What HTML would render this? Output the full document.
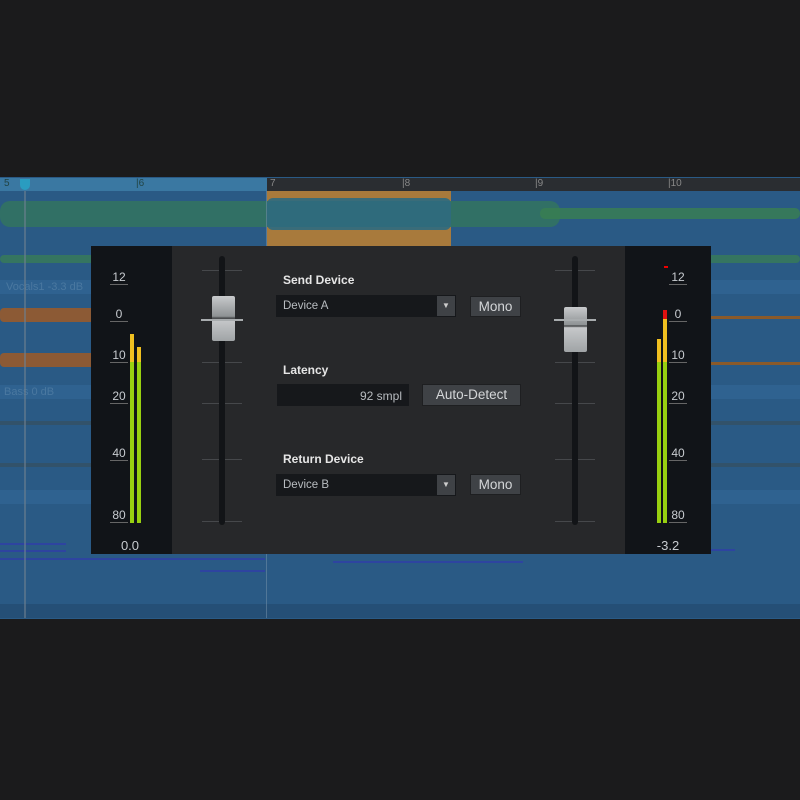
<!DOCTYPE html>
<html><head><meta charset="utf-8"><style>
*{margin:0;padding:0;box-sizing:border-box}
body{width:800px;height:800px;background:#1b1b1c;position:relative;overflow:hidden;font-family:"Liberation Sans","DejaVu Sans",sans-serif}
.a{position:absolute}
.t{color:#9aa0a6;font-size:12px}
.lbl{color:#e6e6e6;font-size:12px;font-weight:bold}
.dd{background:#16181b;color:#b8bcc0;font-size:11.5px;padding:5px 7px}
.btn{background:#3f4246;border:1px solid #1e1f21;color:#d4d6d8;font-size:13.5px;text-align:center;line-height:19px}
.tick{background:#46484b;height:1px}
.sl{color:#c8ccd0;font-size:12px;border-bottom:1px solid #666;width:18px;text-align:center;line-height:13px}
</style></head><body>
<div class="a" style="left:0;top:177px;width:800px;height:442px;background:#2a5a85"></div>
<div class="a" style="left:0;top:178px;width:267px;height:13px;background:#3a78a2"></div>
<div class="a" style="left:267px;top:178px;width:533px;height:13px;background:#2a2d31"></div>
<div class="a t" style="left:4px;top:178px;font-size:10px;color:#244">5</div>
<div class="a t" style="left:136px;top:178px;font-size:10px;color:#244">|6</div>
<div class="a t" style="left:270px;top:178px;font-size:10px;color:#888">7</div>
<div class="a t" style="left:402px;top:178px;font-size:10px;color:#888">|8</div>
<div class="a t" style="left:535px;top:178px;font-size:10px;color:#888">|9</div>
<div class="a t" style="left:668px;top:178px;font-size:10px;color:#888">|10</div>
<div class="a" style="left:20px;top:179px;width:10px;height:11px;background:#2a9cc0;border-radius:0 0 5px 5px"></div>
<div class="a" style="left:267px;top:191px;width:184px;height:55px;background:#a87a3c"></div>
<div class="a" style="left:0;top:201px;width:560px;height:26px;background:#33745f;opacity:.85;border-radius:10px"></div>
<div class="a" style="left:267px;top:198px;width:184px;height:32px;background:#2e6a80;opacity:.9;border-radius:6px"></div>
<div class="a" style="left:540px;top:208px;width:260px;height:11px;background:#3a8050;opacity:.8;border-radius:5px"></div>
<div class="a" style="left:0;top:255px;width:800px;height:8px;background:#3a8050;opacity:.7;border-radius:4px"></div>
<div class="a" style="left:0;top:280px;width:800px;height:14px;background:#2f6290"></div>
<div class="a t" style="left:6px;top:281px;font-size:11px;color:#4a78a0">Vocals1 -3.3 dB</div>
<div class="a" style="left:0;top:308px;width:95px;height:14px;background:#a55a20;opacity:.8;border-radius:4px"></div>
<div class="a" style="left:0;top:353px;width:95px;height:14px;background:#a55a20;opacity:.8;border-radius:4px"></div>
<div class="a" style="left:711px;top:316px;width:89px;height:3px;background:#8a5a2a"></div>
<div class="a" style="left:711px;top:362px;width:89px;height:3px;background:#8a5a2a"></div>
<div class="a" style="left:0;top:385px;width:800px;height:14px;background:#2f6290"></div>
<div class="a t" style="left:4px;top:386px;font-size:11px;color:#4a78a0">Bass 0 dB</div>
<div class="a" style="left:0;top:421px;width:800px;height:4px;background:#3a4a50;opacity:.5"></div>
<div class="a" style="left:0;top:463px;width:800px;height:4px;background:#3a4a50;opacity:.5"></div>
<div class="a" style="left:0;top:490px;width:800px;height:14px;background:#2f6290"></div>
<div class="a" style="left:0;top:543px;width:66px;height:2px;background:#2e44a0"></div>
<div class="a" style="left:0;top:550px;width:66px;height:2px;background:#2e44a0"></div>
<div class="a" style="left:0;top:558px;width:265px;height:2px;background:#2e44a0"></div>
<div class="a" style="left:200px;top:570px;width:65px;height:2px;background:#2e44a0"></div>
<div class="a" style="left:333px;top:561px;width:190px;height:2px;background:#2e44a0"></div>
<div class="a" style="left:711px;top:549px;width:24px;height:2px;background:#2e44a0"></div>
<div class="a" style="left:0;top:604px;width:800px;height:14px;background:#254f76"></div>
<div class="a" style="left:24px;top:191px;width:2px;height:427px;background:#6c7f90;opacity:.6"></div>
<div class="a" style="left:266px;top:191px;width:1px;height:427px;background:#6c8aa5;opacity:.6"></div>
<div class="a" style="left:91px;top:246px;width:620px;height:308px;background:#27282a"></div>
<div class="a" style="left:91px;top:246px;width:81px;height:308px;background:#111418"></div>
<div class="a" style="left:625px;top:246px;width:86px;height:308px;background:#111418"></div>
<div class="a sl" style="left:110px;top:271px">12</div>
<div class="a sl" style="left:110px;top:308px">0</div>
<div class="a sl" style="left:110px;top:349px">10</div>
<div class="a sl" style="left:110px;top:390px">20</div>
<div class="a sl" style="left:110px;top:447px">40</div>
<div class="a sl" style="left:110px;top:509px">80</div>
<div class="a" style="left:130px;top:334px;width:4px;height:189px;background:linear-gradient(#f0c020 0 28px,#98d010 28px)"></div>
<div class="a" style="left:137px;top:347px;width:4px;height:176px;background:linear-gradient(#f0c020 0 15px,#98d010 15px)"></div>
<div class="a" style="left:110px;top:538px;width:40px;text-align:center;color:#c8ccd0;font-size:13px">0.0</div>
<div class="a sl" style="left:669px;top:271px">12</div>
<div class="a sl" style="left:669px;top:308px">0</div>
<div class="a sl" style="left:669px;top:349px">10</div>
<div class="a sl" style="left:669px;top:390px">20</div>
<div class="a sl" style="left:669px;top:447px">40</div>
<div class="a sl" style="left:669px;top:509px">80</div>
<div class="a" style="left:664px;top:266px;width:4px;height:2px;background:#e00"></div>
<div class="a" style="left:657px;top:339px;width:4px;height:184px;background:linear-gradient(#f0c020 0 23px,#98d010 23px)"></div>
<div class="a" style="left:663px;top:310px;width:4px;height:213px;background:linear-gradient(#e01010 0 9px,#f0c020 9px 52px,#98d010 52px)"></div>
<div class="a" style="left:648px;top:538px;width:40px;text-align:center;color:#c8ccd0;font-size:13px">-3.2</div>
<div class="a tick" style="left:202px;top:270px;width:40px"></div>
<div class="a tick" style="left:202px;top:362px;width:40px"></div>
<div class="a tick" style="left:202px;top:403px;width:40px"></div>
<div class="a tick" style="left:202px;top:459px;width:40px"></div>
<div class="a tick" style="left:202px;top:521px;width:40px"></div>
<div class="a" style="left:219px;top:256px;width:6px;height:269px;background:#121417;border-radius:3px"></div>
<div class="a" style="left:212px;top:296px;width:23px;height:45px;background:linear-gradient(#c8cacc,#8e9294 45%,#3a3c3e 50%,#c6c8ca 53%,#a0a4a6);border-radius:2px"></div>
<div class="a" style="left:201px;top:319px;width:42px;height:2px;background:#a8acae"></div>
<div class="a tick" style="left:555px;top:270px;width:40px"></div>
<div class="a tick" style="left:555px;top:362px;width:40px"></div>
<div class="a tick" style="left:555px;top:403px;width:40px"></div>
<div class="a tick" style="left:555px;top:459px;width:40px"></div>
<div class="a tick" style="left:555px;top:521px;width:40px"></div>
<div class="a" style="left:572px;top:256px;width:6px;height:269px;background:#121417;border-radius:3px"></div>
<div class="a" style="left:564px;top:307px;width:23px;height:45px;background:linear-gradient(#c8cacc,#8e9294 40%,#3a3c3e 42%,#c6c8ca 46%,#a0a4a6);border-radius:2px"></div>
<div class="a" style="left:554px;top:319px;width:42px;height:2px;background:#a8acae"></div>
<div class="a lbl" style="left:283px;top:273px">Send Device</div>
<div class="a dd" style="left:276px;top:295px;width:180px;height:22px">Device A</div>
<div class="a" style="left:437px;top:296px;width:18px;height:20px;background:#3f4246;color:#ccc;font-size:8px;text-align:center;line-height:20px">▼</div>
<div class="a btn" style="left:470px;top:296px;width:51px;height:21px">Mono</div>
<div class="a lbl" style="left:283px;top:363px">Latency</div>
<div class="a dd" style="left:277px;top:384px;width:132px;height:22px;text-align:right;font-size:12px">92 smpl</div>
<div class="a btn" style="left:422px;top:384px;width:99px;height:22px">Auto-Detect</div>
<div class="a lbl" style="left:283px;top:452px">Return Device</div>
<div class="a dd" style="left:276px;top:474px;width:180px;height:22px">Device B</div>
<div class="a" style="left:437px;top:475px;width:18px;height:20px;background:#3f4246;color:#ccc;font-size:8px;text-align:center;line-height:20px">▼</div>
<div class="a btn" style="left:470px;top:474px;width:51px;height:21px">Mono</div>
</body></html>
